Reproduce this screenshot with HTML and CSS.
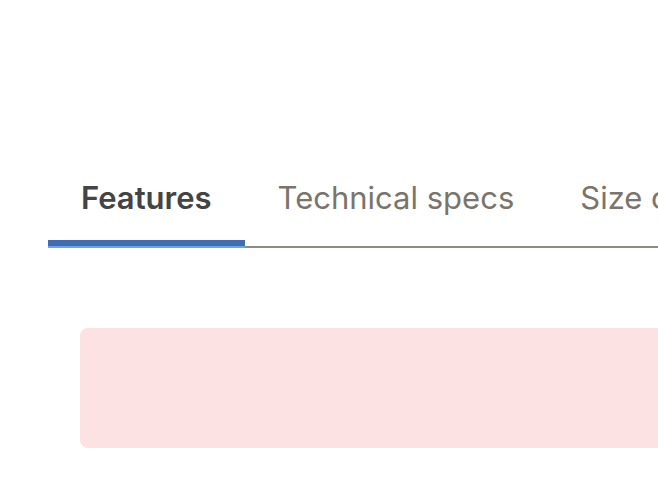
FILE: index.html
```html
<!DOCTYPE html>
<html lang="en">
<head>
<meta charset="utf-8">
<link rel="stylesheet" href="styles.css">
<title>Tabs</title>
</head>
<body>
<div class="page">
  <div class="tabs" role="tablist">
    <div class="tab tab--active" role="tab">Features</div>
    <div class="tab" role="tab">Technical specs</div>
    <div class="tab" role="tab">Size chart</div>
  </div>
  <div class="notice"></div>
</div>
</body>
</html>
```

FILE: styles.css
```css
html, body {
  margin: 0;
  padding: 0;
  background: #ffffff;
  overflow: hidden;
}
.page {
  padding-top: 180px;
  width: 658px;
  overflow: hidden;
}
.tabs {
  display: flex;
  margin-left: 48px;
  width: 800px;
  border-bottom: 2px solid #8f8b80;
  white-space: nowrap;
}
.tab {
  position: relative;
  font-family: Inter, "Liberation Sans", sans-serif;
  font-size: 31px;
  line-height: 36px;
  color: #7a756c;
  padding: 0 33px 30px;
  flex: none;
}
.tab--active {
  color: #444444;
  font-weight: 600;
  padding-bottom: 24px;
  border-bottom: 6px solid #3f6db5;
}
.tab--active::after {
  content: "";
  position: absolute;
  left: 0;
  right: 0;
  bottom: -8px;
  height: 2px;
  background: #6fa3e0;
}
.notice {
  margin: 80px 0 0 80px;
  width: 640px;
  height: 120px;
  background: #fce2e2;
  border-radius: 8px 0 0 8px;
}
```
